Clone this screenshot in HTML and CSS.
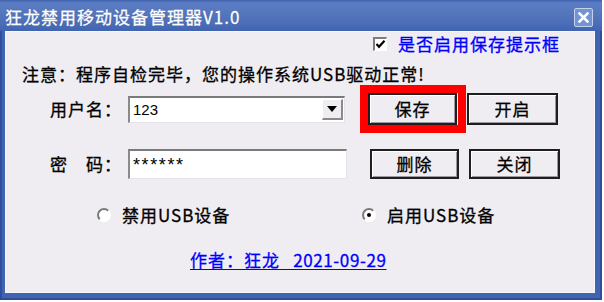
FILE: index.html
```html
<!DOCTYPE html>
<html lang="zh-CN">
<head>
<meta charset="utf-8">
<title>狂龙禁用移动设备管理器V1.0</title>
<link rel="stylesheet" href="styles.css">
</head>
<body>
<div class="window">
  <div class="titlebar">
    <span class="title">狂龙禁用移动设备管理器V1.0</span>
    <span class="close">
      <svg width="11" height="11" viewBox="0 0 11 11"><path d="M1.5 1.5 L9.5 9.5 M9.5 1.5 L1.5 9.5" stroke="#fff" stroke-width="2.6" stroke-linecap="square"/></svg>
    </span>
  </div>
  <div class="frame">
    <div class="client">
      <div class="opt-row">
        <span class="checkbox">
          <svg width="11" height="11" viewBox="0 0 11 11"><path d="M1.5 5 L4 7.8 L9.5 1.8" fill="none" stroke="#000" stroke-width="2.2"/></svg>
        </span>
        <span class="opt-label">是否启用保存提示框</span>
      </div>
      <div class="notice">注意：程序自检完毕，您的操作系统USB驱动正常!</div>
      <div class="form-row row1">
        <span class="label">用户名：</span>
        <div class="field combo">
          <span class="value">123</span>
          <span class="drop"><svg width="10" height="6" viewBox="0 0 10 6"><path d="M0 0 H10 L5 6 Z" fill="#000"/></svg></span>
        </div>
        <button class="btn btn-first btn-save">保存<span class="highlight"></span></button>
        <button class="btn btn-second">开启</button>
      </div>
      <div class="form-row row2">
        <span class="label">密　码：</span>
        <div class="field pwd"><span class="value stars">******</span></div>
        <button class="btn btn-first">删除</button>
        <button class="btn btn-second">关闭</button>
      </div>
      <div class="radio-row">
        <label class="radio-item"><span class="radio"></span><span class="radio-text">禁用USB设备</span></label>
        <label class="radio-item"><span class="radio checked"></span><span class="radio-text">启用USB设备</span></label>
      </div>
      <div class="author"><a class="author-link">作者：狂龙<span class="date">&nbsp;&nbsp;&nbsp;2021-09-29</span></a></div>
    </div>
  </div>
</div>
</body>
</html>
```

FILE: styles.css
```css
* { box-sizing: border-box; }
html, body { margin: 0; padding: 0; }
body {
  width: 604px;
  height: 302px;
  background: #ffffff;
  overflow: hidden;
  font-family: "Noto Sans CJK SC", "Noto Sans", sans-serif;
  font-size: 17px;
  letter-spacing: 1px;
  color: #000;
  -webkit-text-stroke: 0.3px currentColor;
}
.window {
  width: 602px;
  height: 300px;
  display: flex;
  flex-direction: column;
}
.titlebar {
  height: 31px;
  flex: none;
  display: flex;
  align-items: center;
  justify-content: space-between;
  padding: 3px 9px 0 5px;
  background: linear-gradient(#3f61ad 0, #5b7dc4 3px, #5677be 12px, #4b6db7 24px, #4164b1 31px);
}
.title {
  color: #fff;
  line-height: 22px;
  text-shadow: 0 0 1px rgba(30, 50, 110, .5);
}
.close {
  width: 19px;
  height: 19px;
  display: flex;
  align-items: center;
  justify-content: center;
  background: #7393d2;
  border: 1px solid #c3d1ef;
  border-radius: 2px;
  -webkit-text-stroke: 0;
}
.frame {
  flex: 1;
  display: flex;
  padding: 0 7px 7px 5px;
  background: #4164b1;
  box-shadow: inset 2px 0 0 #2f4f9c, inset -2px 0 0 #2f4f9c, inset 0 -2px 0 #2f4f9c;
}
.client {
  flex: 1;
  background: #efedf2;
  box-shadow: inset 0 0 0 1px #f7f6fa;
  display: flex;
  flex-direction: column;
}
.opt-row {
  margin-top: 3px;
  height: 20px;
  display: flex;
  align-items: center;
  padding-left: 368px;
}
.checkbox {
  width: 14px;
  height: 14px;
  border-style: solid;
  border-width: 2px 1px 1px 2px;
  border-color: #7c7c7c #ffffff #ffffff #7c7c7c;
  background: #fff;
  display: flex;
  align-items: center;
  justify-content: center;
}
.opt-label {
  margin-left: 11px;
  color: #0000ff;
  line-height: 20px;
}
.notice {
  margin-top: 9px;
  height: 22px;
  line-height: 22px;
  padding-left: 17px;
}
.form-row {
  display: flex;
  align-items: center;
  height: 32px;
  padding-left: 45px;
}
.row1 { margin-top: 8px; }
.row2 { margin-top: 23px; }
.label {
  width: 78px;
  line-height: 22px;
}
.field {
  background: #fff;
  border-style: solid;
  border-width: 2px 1px 1px 2px;
  border-color: #7a7a7a #e4e2e8 #e4e2e8 #8a8a8a;
  display: flex;
  align-items: center;
  font-family: "Liberation Sans", sans-serif;
  font-size: 15px;
  letter-spacing: 0;
  -webkit-text-stroke: 0;
}
.combo {
  width: 217px;
  height: 27px;
  padding-left: 3px;
  justify-content: space-between;
}
.pwd {
  width: 219px;
  height: 30px;
  padding-left: 3px;
  align-items: flex-start;
}
.stars {
  font-size: 18px;
  letter-spacing: 1.6px;
  line-height: 18px;
  margin-top: 5px;
}
.drop {
  width: 21px;
  height: 21px;
  margin-right: 1px;
  background: #efedf2;
  border-style: solid;
  border-width: 1px 2px 2px 1px;
  border-color: #ffffff #8a8a8a #8a8a8a #ffffff;
  display: flex;
  align-items: center;
  justify-content: center;
}
.btn {
  position: relative;
  height: 32px;
  padding: 0;
  background: #efedf2;
  border: 2px solid #1e1e1e;
  box-shadow: inset 1px 1px 0 #ffffff, inset -1px -1px 0 #9a98a0;
  font-family: inherit;
  font-size: 17px;
  letter-spacing: 1px;
  color: #000;
  line-height: 22px;
  -webkit-text-stroke: 0.3px #000;
}
.row2 .btn { height: 30px; }
.btn-first { width: 89px; margin-left: 23px; }
.btn-second { width: 91px; margin-left: 10px; }
.highlight {
  position: absolute;
  left: -10px;
  right: -11px;
  top: -10px;
  bottom: -10px;
  border: 8px solid #ff0000;
}
.radio-row {
  margin-top: 24px;
  height: 22px;
  display: grid;
  grid-template-columns: 265px auto;
  padding-left: 92px;
  align-items: center;
}
.radio-item {
  display: flex;
  align-items: center;
}
.radio {
  width: 14px;
  height: 14px;
  border-radius: 50%;
  background: #fff;
  border: 2px solid;
  border-color: #7a7a7a #ffffff #ffffff #7a7a7a;
  display: flex;
  align-items: center;
  justify-content: center;
}
.radio.checked::after {
  content: "";
  width: 4px;
  height: 4px;
  border-radius: 50%;
  background: #000;
}
.radio-text {
  margin-left: 11px;
  line-height: 22px;
}
.author {
  margin-top: 23px;
  height: 22px;
  padding-left: 185px;
  line-height: 22px;
}
.author-link {
  color: #0000ff;
  text-decoration: underline;
  text-underline-offset: 2px;
}
.date {
  letter-spacing: 0.6px;
}
```
